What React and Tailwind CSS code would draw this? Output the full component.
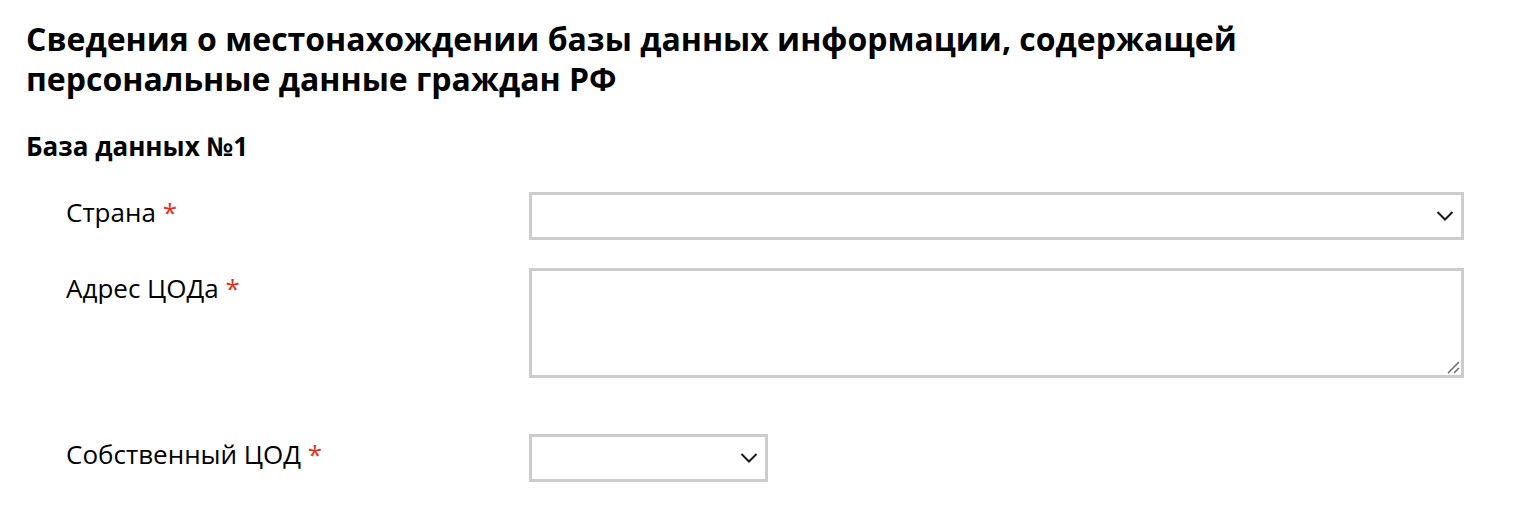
import React from "react";

function Chevron() {
  return (
    <svg width="18" height="11" viewBox="0 0 18 11" fill="none" className="absolute right-[7px] top-1/2 -translate-y-1/2">
      <path d="M1.5 1.5 L9 9 L16.5 1.5" stroke="#1a1a1a" strokeWidth="2" />
    </svg>
  );
}

function Label({ children }) {
  return (
    <div className="w-[503px] shrink-0 pl-[40px] pt-[2px] text-[26px] leading-[36px] text-black">
      {children} <span className="text-[#e0301e]">*</span>
    </div>
  );
}

export default function App() {
  return (
    <div className="bg-white w-[1514px] h-[516px] pl-[26px] pt-[19px] text-black" style={{ fontFamily: '"Open Sans", "Noto Sans", sans-serif' }}>
      <h1 className="text-[32px] leading-[40px] font-bold">
        Сведения о местонахождении базы данных информации, содержащей
        <br />
        персональные данные граждан РФ
      </h1>
      <h2 className="mt-[29px] text-[26px] leading-[36px] font-bold">База данных №1</h2>
      <div className="mt-[28px] flex flex-col">
        <div className="flex items-start">
          <Label>Страна</Label>
          <div className="relative w-[935px] h-[48px] border-[3px] border-[#cccccc] bg-white">
            <Chevron />
          </div>
        </div>
        <div className="mt-[28px] flex items-start">
          <Label>Адрес ЦОДа</Label>
          <div className="relative w-[935px] h-[110px] border-[3px] border-[#cccccc] bg-white">
            <svg width="14" height="14" viewBox="0 0 14 14" className="absolute right-[1px] bottom-[1px]">
              <path d="M2 13 L13 2 M8 13 L13 8" stroke="#6a6a6a" strokeWidth="1.5" />
            </svg>
          </div>
        </div>
        <div className="mt-[56px] flex items-start">
          <Label>Собственный ЦОД</Label>
          <div className="relative w-[239px] h-[48px] border-[3px] border-[#cccccc] bg-white">
            <Chevron />
          </div>
        </div>
      </div>
    </div>
  );
}
